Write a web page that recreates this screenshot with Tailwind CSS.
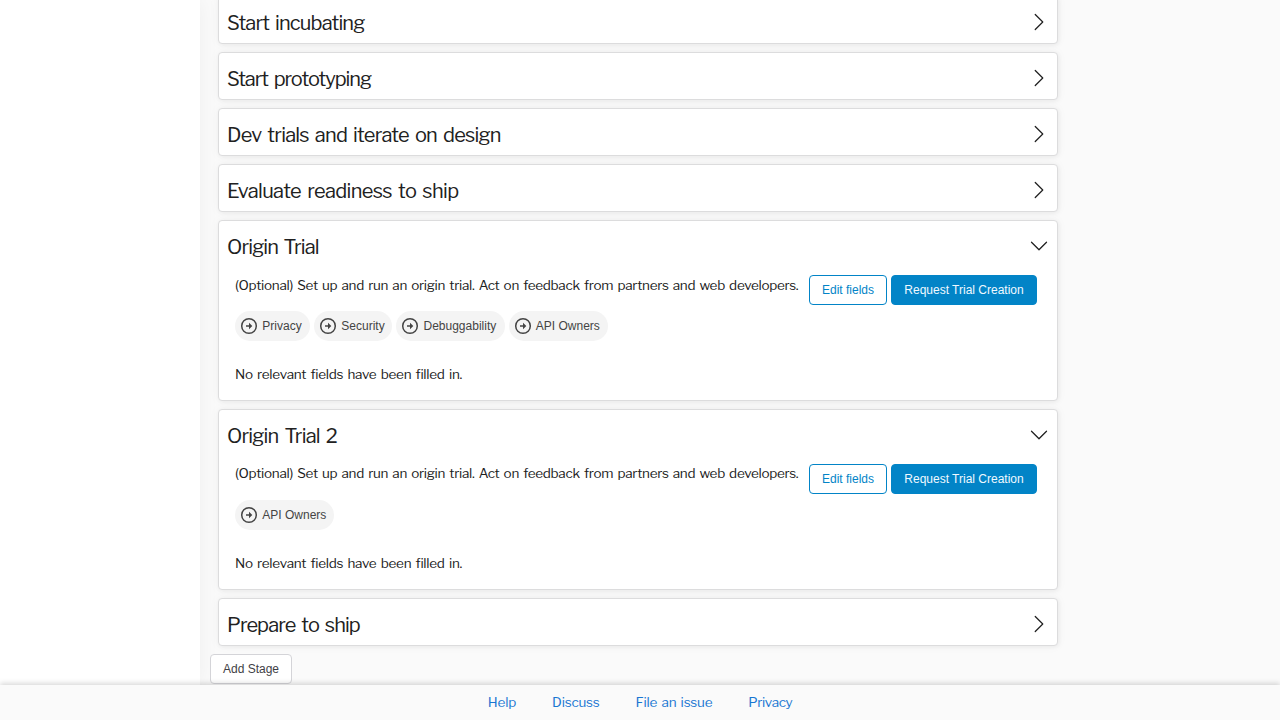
<!DOCTYPE html>
<html lang="en">
<head>
<meta charset="utf-8">
<title>Feature stages</title>
<script src="https://cdn.jsdelivr.net/npm/@tailwindcss/browser@4"></script>
</head>
<body class="h-screen overflow-hidden flex flex-col bg-[#fafafa] text-[#212121] font-['Libre_Franklin','Liberation_Sans',sans-serif] text-[13.5px] leading-[21px] tracking-[-0.3px] [word-spacing:1.6px]">
<svg class="hidden">
  <symbol id="right" viewBox="0 0 16 16"><path fill="currentColor" fill-rule="evenodd" d="M4.646 1.646a.5.5 0 0 1 .708 0l6 6a.5.5 0 0 1 0 .708l-6 6a.5.5 0 0 1-.708-.708L10.293 8 4.646 2.354a.5.5 0 0 1 0-.708z"/></symbol>
  <symbol id="circle" viewBox="0 0 20 20"><circle cx="10" cy="10" r="7.300" fill="none" stroke="currentColor" stroke-width="1.500"/><path fill="currentColor" d="M7 9.200h3V6.800l3.300 3.200-3.300 3.200v-2.400H7z"/></symbol>
</svg>
<div class="flex flex-1 min-h-0">
  <aside class="w-[200px] shrink-0 bg-white shadow-[0_0_20px_rgba(0,0,0,0.05)]"></aside>
  <main class="w-[858px] pl-[10px] -mt-1">
    <div class="pl-2 flex flex-col gap-2">
      <section class="h-12 shrink-0 rounded-[4px] border border-[#dcdcdd] bg-white px-2 flex items-center justify-between shadow-[1px_1px_4px_rgba(0,0,0,0.05),0_0_12px_rgba(0,0,0,0.04)]"><h2 class="text-[20px] tracking-[-0.85px] [word-spacing:2.5px] pt-[7px]">Start incubating</h2><svg class="size-5 mt-1"><use href="#right"/></svg></section>
      <section class="h-12 shrink-0 rounded-[4px] border border-[#dcdcdd] bg-white px-2 flex items-center justify-between shadow-[1px_1px_4px_rgba(0,0,0,0.05),0_0_12px_rgba(0,0,0,0.04)]"><h2 class="text-[20px] tracking-[-1.080px] [word-spacing:2.5px] pt-[7px]">Start prototyping</h2><svg class="size-5 mt-1"><use href="#right"/></svg></section>
      <section class="h-12 shrink-0 rounded-[4px] border border-[#dcdcdd] bg-white px-2 flex items-center justify-between shadow-[1px_1px_4px_rgba(0,0,0,0.05),0_0_12px_rgba(0,0,0,0.04)]"><h2 class="text-[20px] tracking-[-0.78px] [word-spacing:2.5px] pt-[7px]">Dev trials and iterate on design</h2><svg class="size-5 mt-1"><use href="#right"/></svg></section>
      <section class="h-12 shrink-0 rounded-[4px] border border-[#dcdcdd] bg-white px-2 flex items-center justify-between shadow-[1px_1px_4px_rgba(0,0,0,0.05),0_0_12px_rgba(0,0,0,0.04)]"><h2 class="text-[20px] tracking-[-0.64px] [word-spacing:2.5px] pt-[7px]">Evaluate readiness to ship</h2><svg class="size-5 mt-1"><use href="#right"/></svg></section>

      <section class="h-[181px] shrink-0 rounded-[4px] border border-[#dcdcdd] bg-white shadow-[1px_1px_4px_rgba(0,0,0,0.05),0_0_12px_rgba(0,0,0,0.04)]">
        <div class="h-[46px] px-2 flex items-center justify-between"><h2 class="text-[20px] tracking-[-0.85px] [word-spacing:2px] pt-[7px]">Origin Trial</h2><svg class="size-5 mt-1 rotate-90"><use href="#right"/></svg></div>
        <div class="pl-4 pr-5 pt-2">
          <div class="flex justify-between h-[36px]">
            <p class="whitespace-nowrap">(Optional) Set up and run an origin trial. Act on feedback from partners and web developers.</p>
            <div class="flex gap-1 h-[30px] text-[12px] leading-[28px] tracking-normal [word-spacing:0] font-['Liberation_Sans',sans-serif] whitespace-nowrap">
              <button class="w-[78px] border border-[#0284c7] rounded-[4px] text-[#0284c7] bg-white">Edit fields</button>
              <button class="w-[146px] border border-[#0284c7] rounded-[4px] text-[#f0f9ff] bg-[#0284c7]">Request Trial Creation</button>
            </div>
          </div>
          <div class="flex gap-1 text-[12px] tracking-normal [word-spacing:0] text-[#444] font-['Liberation_Sans',sans-serif]">
            <span class="h-[30px] w-[75px] rounded-full bg-[#f4f4f4] flex items-center gap-[3.3px] pl-1"><svg class="size-5"><use href="#circle"/></svg>Privacy</span>
            <span class="h-[30px] w-[78px] rounded-full bg-[#f4f4f4] flex items-center gap-[3.3px] pl-1"><svg class="size-5"><use href="#circle"/></svg>Security</span>
            <span class="h-[30px] w-[108.500px] rounded-full bg-[#f4f4f4] flex items-center gap-[3.5px] pl-1"><svg class="size-5"><use href="#circle"/></svg>Debuggability</span>
            <span class="h-[30px] w-[99px] rounded-full bg-[#f4f4f4] flex items-center gap-[3.3px] pl-1"><svg class="size-5"><use href="#circle"/></svg>API Owners</span>
          </div>
          <p class="mt-[23px] tracking-[-0.26px]">No relevant fields have been filled in.</p>
        </div>
      </section>

      <section class="h-[181px] shrink-0 rounded-[4px] border border-[#dcdcdd] bg-white shadow-[1px_1px_4px_rgba(0,0,0,0.05),0_0_12px_rgba(0,0,0,0.04)]">
        <div class="h-[46px] px-2 flex items-center justify-between"><h2 class="text-[20px] tracking-[-0.8px] [word-spacing:2.5px] pt-[7px]">Origin Trial 2</h2><svg class="size-5 mt-1 rotate-90"><use href="#right"/></svg></div>
        <div class="pl-4 pr-5 pt-2">
          <div class="flex justify-between h-[36px]">
            <p class="whitespace-nowrap -mt-px">(Optional) Set up and run an origin trial. Act on feedback from partners and web developers.</p>
            <div class="flex gap-1 h-[30px] text-[12px] leading-[28px] tracking-normal [word-spacing:0] font-['Liberation_Sans',sans-serif] whitespace-nowrap">
              <button class="w-[78px] border border-[#0284c7] rounded-[4px] text-[#0284c7] bg-white">Edit fields</button>
              <button class="w-[146px] border border-[#0284c7] rounded-[4px] text-[#f0f9ff] bg-[#0284c7]">Request Trial Creation</button>
            </div>
          </div>
          <div class="flex gap-1 text-[12px] tracking-normal [word-spacing:0] text-[#444] font-['Liberation_Sans',sans-serif]">
            <span class="h-[30px] w-[99px] rounded-full bg-[#f4f4f4] flex items-center gap-[3.3px] pl-1"><svg class="size-5"><use href="#circle"/></svg>API Owners</span>
          </div>
          <p class="mt-[23px] tracking-[-0.26px]">No relevant fields have been filled in.</p>
        </div>
      </section>

      <section class="h-12 shrink-0 rounded-[4px] border border-[#dcdcdd] bg-white px-2 flex items-center justify-between shadow-[1px_1px_4px_rgba(0,0,0,0.05),0_0_12px_rgba(0,0,0,0.04)]"><h2 class="text-[20px] tracking-[-0.9px] [word-spacing:2.5px] pt-[7px]">Prepare to ship</h2><svg class="size-5 mt-1"><use href="#right"/></svg></section>
    </div>
    <button class="relative mt-2 h-[30px] w-[82px] border border-[#d4d4d8] rounded-[4px] bg-white text-[#3f3f46] text-[12px] leading-[28px] tracking-normal [word-spacing:0] font-['Liberation_Sans',sans-serif]">Add Stage</button>
  </main>
</div>
<footer class="relative h-[35px] shrink-0 bg-[#fafafa] shadow-[0_-2px_5px_rgba(0,0,0,0.15)] flex justify-center gap-9 pt-[7px] tracking-[-0.2px] text-[#1976d2]">
  <a>Help</a><a>Discuss</a><a>File an issue</a><a class="tracking-[-0.4px]">Privacy</a>
</footer>
</body>
</html>
